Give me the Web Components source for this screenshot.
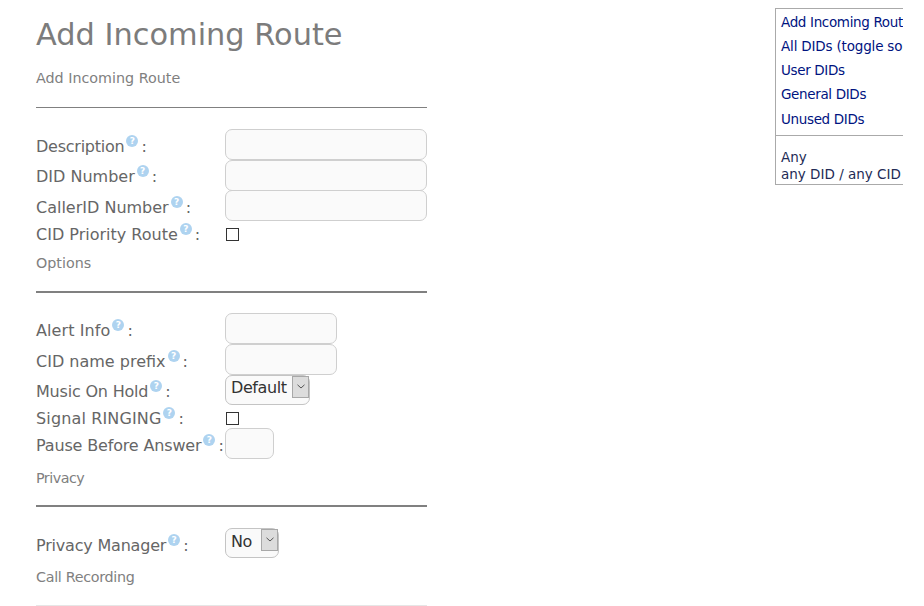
<!DOCTYPE html>
<html>
<head>
<meta charset="utf-8">
<title>Add Incoming Route</title>
<style>
  html, body { margin: 0; background: #fff; overflow: hidden; }
  body { font-family: "DejaVu Sans", Verdana, sans-serif; width: 924px; height: 606px; }
</style>
</head>
<body>

<template id="route-page-template">
  <style>
    :host { display: flex; width: 903px; height: 606px; overflow: hidden; justify-content: space-between; align-items: flex-start; }
    main { width: 391px; margin-left: 36px; flex: none; }
    aside { flex: none; margin-top: 8px; }
    h2 { margin: 0; padding-top: 15px; height: 39px; font: 400 30.4px/39px "DejaVu Sans", Verdana, sans-serif; color: #7c7c7c; white-space: nowrap; }
  </style>
  <main>
    <h2><slot name="title"></slot></h2>
    <slot></slot>
  </main>
  <aside><slot name="side"></slot></aside>
</template>

<template id="route-section-template">
  <style>
    :host { display: block; }
    .head { font-size: 14.3px; line-height: 16px; color: #808080; padding-top: var(--head-top, 0); }
    hr { border: 0; margin: var(--rule-top, 20px) 0 var(--rule-bottom, 20px); height: var(--rule-size, 2px); background: var(--rule-color, #808080); }
  </style>
  <div class="head"><slot name="head"></slot></div>
  <hr>
  <slot></slot>
</template>

<template id="route-row-template">
  <style>
    :host { display: flex; align-items: flex-start; height: var(--row-height, 30.5px); }
    label { flex: none; width: 189px; white-space: nowrap; box-sizing: border-box; padding-top: var(--label-top, 6px); font-size: 16px; line-height: 22px; color: #666; }
    :host([check]) { --row-height: 23px; --label-top: 2px; }
    .colon { margin-left: 3px; }
  </style>
  <label><slot name="label"></slot><route-help></route-help><span class="colon">:</span></label>
  <slot></slot>
</template>

<template id="route-help-template">
  <style>
    :host { display: inline-block; width: 12px; height: 12px; margin-left: 2px; border-radius: 50%; background: #aed3f0; color: #fff; font: 700 9px/12px "DejaVu Sans", sans-serif; letter-spacing: 0; text-align: center; vertical-align: 8px; }
  </style>?
</template>

<template id="route-input-template">
  <style>
    :host { display: block; }
    input { display: block; box-sizing: border-box; width: var(--w, 202px); height: 31px; margin: 0; padding: 0 6px; border: 1px solid #cfcfcf; border-radius: 7px; background: #fafafa; font: inherit; outline: 0; }
  </style>
  <input type="text">
</template>

<template id="route-check-template">
  <style>
    :host { display: block; }
    input { appearance: none; display: block; box-sizing: border-box; width: 13px; height: 13px; margin: 7px 0 0 1px; border: 1px solid #333; background: #fff; }
  </style>
  <input type="checkbox">
</template>

<template id="route-select-template">
  <style>
    :host { display: block; position: relative; width: var(--w, 85px); height: 30px; }
    select { appearance: none; display: block; box-sizing: border-box; width: 100%; height: 30px; margin: 0; padding: 0 0 4px 5px; border: 1px solid #c4c4c4; border-radius: 7px; background: #fafafa; color: #333; font: 16px "DejaVu Sans", Verdana, sans-serif; letter-spacing: -.4px; outline: 0; }
    .arrow { position: absolute; top: 1px; right: 1px; width: 17px; height: 22px; box-sizing: border-box; border: 1px solid #a8a8a8; background: #dcdcdc; }
    svg { display: block; margin: 7px auto 0; }
  </style>
  <select></select>
  <span class="arrow"><svg width="8" height="5" viewBox="0 0 8 5"><path d="M.5.8 4 4 7.5.8" fill="none" stroke="#555" stroke-width="1"/></svg></span>
</template>

<template id="route-side-template">
  <style>
    :host { display: block; width: 128px; box-sizing: border-box; border: 1px solid #aaa; border-right: 0; overflow: hidden; font-size: 13.5px; color: #00137f; white-space: nowrap; }
    .links { padding: 1px 0 5px 5px; height: 126px; box-sizing: border-box; }
    .any { border-top: 1px solid #aaa; padding: 13px 0 1px 5px; line-height: 17px; color: #222b55; }
    ::slotted(a) { display: block; height: 24px; line-height: 24px; letter-spacing: -.35px; color: #00137f; text-decoration: none; }
    ::slotted(a:last-of-type) { margin-top: 1px; }
  </style>
  <div class="links"><slot></slot></div>
  <div class="any"><slot name="any"></slot></div>
</template>

<route-page>
  <span slot="title">Add Incoming Route</span>

  <route-section style="--head-top:16px;--rule-top:21px;--rule-bottom:21px;--rule-size:1px">
    <span slot="head">Add Incoming Route</span>
    <route-row><span slot="label" style="letter-spacing:-.25px">Description</span><route-input></route-input></route-row>
    <route-row style="--label-top:5px"><span slot="label">DID Number</span><route-input></route-input></route-row>
    <route-row><span slot="label">CallerID Number</span><route-input></route-input></route-row>
    <route-row check><span slot="label">CID Priority Route</span><route-check></route-check></route-row>
  </route-section>

  <route-section style="--head-top:11px">
    <span slot="head">Options</span>
    <route-row style="--row-height:31px"><span slot="label" style="letter-spacing:.1px">Alert Info</span><route-input style="--w:112px"></route-input></route-row>
    <route-row style="--row-height:31px"><span slot="label">CID name prefix</span><route-input style="--w:112px"></route-input></route-row>
    <route-row style="--row-height:30px;--label-top:5px"><span slot="label" style="letter-spacing:-.2px">Music On Hold</span><route-select options="Default"></route-select></route-row>
    <route-row check><span slot="label" style="letter-spacing:.14px">Signal RINGING</span><route-check></route-check></route-row>
    <route-row><span slot="label" style="letter-spacing:-.16px">Pause Before Answer</span><route-input style="--w:49px"></route-input></route-row>
  </route-section>

  <route-section style="--head-top:12px;--rule-top:19px;--rule-bottom:21px">
    <span slot="head" style="letter-spacing:-.5px">Privacy</span>
    <route-row><span slot="label" style="letter-spacing:-.2px">Privacy Manager</span><route-select options="No,Yes" style="--w:54px"></route-select></route-row>
  </route-section>

  <route-section style="--head-top:10px;--rule-size:1px;--rule-color:#e6e6e6">
    <span slot="head" style="letter-spacing:-.3px">Call Recording</span>
  </route-section>

  <route-side slot="side">
    <a href="#">Add Incoming Route</a>
    <a href="#" style="letter-spacing:-.18px">All DIDs (toggle sort)</a>
    <a href="#">User DIDs</a>
    <a href="#">General DIDs</a>
    <a href="#">Unused DIDs</a>
    <div slot="any">Any<br>any DID / any CID</div>
  </route-side>
</route-page>

<script>
  {
    'use strict';
    // plain elements that only stamp their template into a shadow root
    class Stamped extends HTMLElement {
      constructor() {
        super();
        this.attachShadow({mode: 'open'});
        const tpl = document.getElementById(this.localName + '-template');
        this.shadowRoot.appendChild(tpl.content.cloneNode(true));
      }
    }
    customElements.define('route-page', class extends Stamped {});
    customElements.define('route-section', class extends Stamped {});
    customElements.define('route-row', class extends Stamped {});
    customElements.define('route-help', class extends Stamped {});
    customElements.define('route-input', class extends Stamped {});
    customElements.define('route-check', class extends Stamped {});
    customElements.define('route-side', class extends Stamped {});
    customElements.define('route-select', class extends Stamped {
      connectedCallback() {
        const select = this.shadowRoot.querySelector('select');
        if (select.options.length) return;
        for (const text of (this.getAttribute('options') || '').split(',')) {
          select.add(new Option(text));
        }
      }
    });
  }
</script>
</body>
</html>
